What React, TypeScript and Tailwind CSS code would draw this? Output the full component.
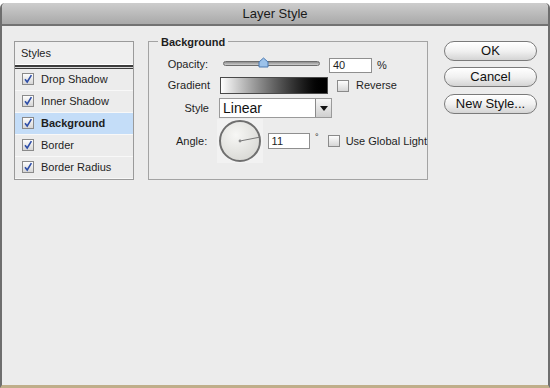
import React from "react";

const font = { fontFamily: '"Liberation Sans", Arial, sans-serif' };

function Check({ checked }: { checked?: boolean }) {
  return (
    <div className="w-[12px] h-[12px] border border-[#8a8a8a] bg-gradient-to-b from-[#fdfdfd] to-[#d6d6d6] flex items-center justify-center shrink-0">
      {checked && (
        <svg width="10" height="10" viewBox="0 0 10 10">
          <path d="M2 5.2 L4.2 8 L8.4 1.2" fill="none" stroke="#2f4fa8" strokeWidth="1.6" />
        </svg>
      )}
    </div>
  );
}

function StyleRow({ label, checked, active }: { label: string; checked?: boolean; active?: boolean }) {
  return (
    <div
      className={`h-[22.4px] flex items-center pl-[7px] border-b border-[#f8f8f8] ${
        active ? "bg-[#c4ddf8] font-bold" : "bg-[#ececec]"
      }`}
    >
      <Check checked={checked} />
      <span className="ml-[7px] text-[11px] text-[#1e1e1e]">{label}</span>
    </div>
  );
}

function Btn({ children }: { children: React.ReactNode }) {
  return (
    <div className="h-[20px] w-[93px] rounded-full border border-[#7a7a7a] bg-gradient-to-b from-[#ffffff] via-[#f1f1f1] to-[#d4d4d4] flex items-center justify-center text-[13px] text-[#111] shadow-[inset_0_1px_0_#fff]">
      {children}
    </div>
  );
}

export default function App() {
  return (
    <div className="w-[550px] h-[388px] bg-white overflow-hidden" style={font}>
      <div className="mt-[3px] h-[385px] flex flex-col rounded-t-[5px] border-x-[2px] border-[#6e6e6e] border-b-[3px] border-b-[#bfae8a] overflow-hidden">
        {/* Title bar */}
        <div className="h-[23px] shrink-0 bg-gradient-to-b from-[#cdcdcd] to-[#a9a9a9] border-b-[2px] border-[#727272] flex items-center justify-center">
          <span className="text-[13px] text-[#1a1a1a] mt-[1px]">Layer Style</span>
        </div>
        {/* Content */}
        <div className="flex-1 bg-[#ececec] flex items-start pt-[15px] pl-[12px]">
          {/* Styles list */}
          <div className="w-[120px] h-[139px] border border-[#9a9a9a] bg-[#ececec] flex flex-col">
            <div className="h-[22px] flex items-center pl-[6px] text-[11px] text-[#1e1e1e] bg-[#efefef]">Styles</div>
            <div className="h-[1px] bg-[#ffffff]" />
            <div className="h-[2px] bg-[#3c3c3c]" />
            <div className="h-[1px] bg-[#d8d8d8]" />
            <div className="h-[1px] bg-[#3c3c3c]" />
            <StyleRow label="Drop Shadow" checked />
            <StyleRow label="Inner Shadow" checked />
            <StyleRow label="Background" checked active />
            <StyleRow label="Border" checked />
            <StyleRow label="Border Radius" checked />
          </div>

          {/* Background fieldset */}
          <div className="ml-[14px] w-[280px] h-[139px] border border-[#a3a3a3] relative pt-[14px] text-[11px] text-[#1e1e1e]">
            <span className="absolute -top-[8px] left-[9px] px-[3px] bg-[#ececec] font-bold text-[11px]">Background</span>

            {/* Opacity */}
            <div className="flex items-center h-[17px]">
              <span className="w-[59px] text-right">Opacity:</span>
              <div className="ml-[15px] w-[97px] h-[5px] rounded-full border border-[#6d6d6d] bg-gradient-to-b from-[#8d8d8d] to-[#d0d0d0] relative -mt-[3px]">
                <svg className="absolute -top-[5px] left-[34px]" width="11" height="11" viewBox="0 0 11 11">
                  <path d="M1 5 L5.5 1 L10 5 L10 10 L1 10 Z" fill="#9cc2ea" stroke="#4a78b0" strokeWidth="1" />
                </svg>
              </div>
              <div className="ml-[9px] w-[43px] h-[15px] border border-[#8f8f8f] bg-white flex items-center pl-[3px] mt-[2px]">40</div>
              <span className="ml-[5px] mt-[2px]">%</span>
            </div>

            {/* Gradient */}
            <div className="flex items-center h-[17px] mt-[4px]">
              <span className="w-[61px] text-right">Gradient</span>
              <div className="ml-[10px] w-[108px] h-[17px] border border-[#4a4a4a] bg-gradient-to-r from-[#ffffff] to-[#000000]" />
              <div className="ml-[9px]"><Check /></div>
              <span className="ml-[7px]">Reverse</span>
            </div>

            {/* Style */}
            <div className="flex items-center h-[20px] mt-[4px]">
              <span className="w-[60px] text-right">Style</span>
              <div className="ml-[10px] w-[113px] h-[20px] border border-[#9a9a9a] bg-white flex items-center">
                <span className="flex-1 pl-[3px] text-[14px] text-[#111]">Linear</span>
                <div className="w-[16px] h-[18px] border-l border-[#8a8a8a] bg-gradient-to-b from-[#f6f6f6] to-[#cfcfcf] flex items-center justify-center">
                  <svg width="8" height="5" viewBox="0 0 8 5"><path d="M0 0 L8 0 L4 5 Z" fill="#111" /></svg>
                </div>
              </div>
            </div>

            {/* Angle */}
            <div className="flex items-center h-[44px] mt-[1px]">
              <span className="w-[59px] text-right">Angle:</span>
              <div className="ml-[10px] w-[46px] h-[44px] bg-[#f2f2f2] flex items-center justify-center">
                <svg width="44" height="44" viewBox="0 0 44 44">
                  <defs>
                    <radialGradient id="dg" cx="40%" cy="35%" r="70%">
                      <stop offset="0%" stopColor="#f7f7f5" />
                      <stop offset="100%" stopColor="#d8d8d4" />
                    </radialGradient>
                  </defs>
                  <circle cx="22" cy="22" r="20" fill="url(#dg)" stroke="#6f6f6f" strokeWidth="2" />
                  <line x1="22" y1="22" x2="41" y2="18.3" stroke="#777" strokeWidth="1" />
                  <circle cx="22" cy="22" r="1.4" fill="#8a8a8a" />
                </svg>
              </div>
              <div className="ml-[5px] w-[43px] h-[16px] border border-[#8f8f8f] bg-white flex items-center pl-[3px]">11</div>
              <span className="ml-[5px] -mt-[6px] text-[9px]">°</span>
              <div className="ml-[9px]"><Check /></div>
              <span className="ml-[6px] whitespace-nowrap">Use Global Light</span>
            </div>
          </div>

          {/* Buttons */}
          <div className="ml-[16px] flex flex-col gap-[6px]">
            <Btn>OK</Btn>
            <Btn>Cancel</Btn>
            <div className="mt-[1px]"><Btn>New Style...</Btn></div>
          </div>
        </div>
      </div>
    </div>
  );
}
